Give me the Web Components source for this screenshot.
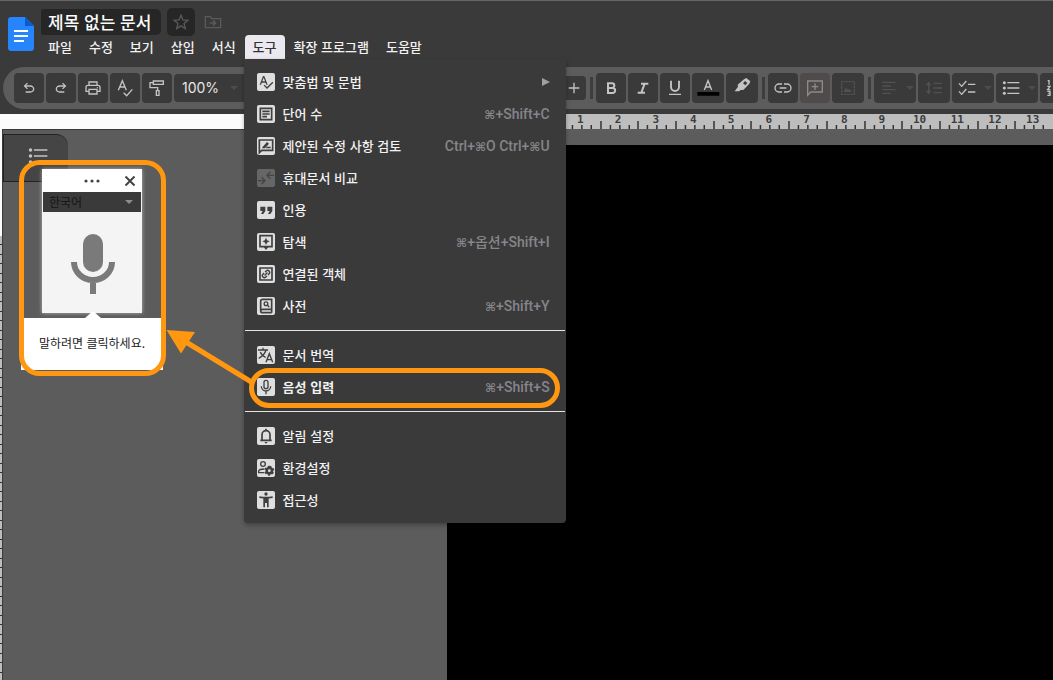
<!DOCTYPE html>
<html lang="ko">
<head>
<meta charset="utf-8">
<title>제목 없는 문서</title>
<style>
  html, body { margin: 0; height: 100%; overflow: hidden; background: #5c5c5c; }
  body { font-family: "Noto Sans CJK KR", sans-serif; font-size: 13px; font-weight: 500; color: #f2f2f2; }
</style>
</head>
<body>
<docs-app></docs-app>
<script>
const S = 'fill="none" stroke="currentColor" stroke-width="2"';
const B = 'fill="none" stroke="currentColor" stroke-width="2.500"';
const ICONS = {
  star: `<path ${S} d="M12 2l2.900 6.900 7.400.6-5.700 4.900 1.800 7.300-6.400-3.900-6.400 3.900 1.800-7.300L1.700 9.500l7.400-.6z"/>`,
  folder: `<path ${S} d="M.500 4h7.500l2 3h13.500v13.500h-23z"/><path ${S} d="M7 13.500h9m-4-4l4 4-4 4"/>`,
  undo: `<path fill="currentColor" d="M7 19v-2h7.1q1.575 0 2.737-1T18 13.5 16.838 11 14.1 10H7.8l2.6 2.6L9 14 4 9l5-5 1.400 1.400L7.800 8h6.300q2.425 0 4.163 1.575T20 13.500t-1.737 3.925T14.100 19z"/>`,
  redo: `<path fill="currentColor" transform="matrix(-1 0 0 1 24 0)" d="M7 19v-2h7.1q1.575 0 2.737-1T18 13.5 16.838 11 14.1 10H7.8l2.6 2.6L9 14 4 9l5-5 1.400 1.400L7.800 8h6.300q2.425 0 4.163 1.575T20 13.500t-1.737 3.925T14.100 19z"/>`,
  print: `<path ${S} d="M6 8V3h12v5M6 17H1.500v-6q0-3 3-3h15q3 0 3 3v6H18M6 14h12v7H6z"/><circle cx="18.500" cy="11.500" r="1" fill="currentColor"/>`,
  spell: `<path fill="currentColor" d="M12.450 16h2.090L9.430 3H7.570L2.460 16h2.090l1.120-3h5.640l1.140 3zm-6.020-5L8.500 5.480 10.570 11H6.430zm15.160.590l-8.090 8.090L9.830 16l-1.410 1.410 5.090 5.090L23 13l-1.410-1.410z"/>`,
  spellbar: `<path ${S} stroke-width="2.300" d="M2 15.500L8 1l6 14.500M4.500 10.500h7M10 19l4.500 4.500L23 14"/>`,
  paint: `<path ${S} d="M6.500 1.500h15v5h-15zM6.500 4H1.500v7.500H13V16"/><path ${S} d="M11 16h4v7h-4z"/>`,
  plus: `<path ${S} d="M12 4v16M4 12h16"/>`,
  bold: `<path fill="none" stroke="currentColor" stroke-width="3" d="M7.500 5h6a3.200 3.200 0 010 7H7.500zM7.500 12h7a3.500 3.500 0 010 7.500H7.500z"/>`,
  italic: `<path fill="none" stroke="currentColor" stroke-width="3" d="M9 5.500h11M4 19h11M14.500 5.500L9.500 19"/>`,
  underline: `<path fill="none" stroke="currentColor" stroke-width="2.800" d="M6 1v9.500a6 6 0 0012 0V1"/><path ${S} d="M3 21.500h18"/>`,
  color: `<path ${S} stroke-width="2.500" d="M6.500 15L12 1l5.500 14M8.500 10.500h7"/><path d="M-4 18h33v5.500H-4z" fill="#000"/>`,
  pen: `<path fill="currentColor" fill-rule="evenodd" d="M15 -1l3.500-2 6 5-1.500 3.500-9 9.500-4 0-2.500 2H1l5-7-.500-3zM13.500 5l3.500 3 3-3.500L16.500 1.500z"/>`,
  link: `<path ${S} stroke-width="2.500" d="M10.500 6H6a6 6 0 000 12h4.500M13.500 6H18a6 6 0 010 12h-4.500M7 12h10"/>`,
  comment: `<path ${S} d="M1 23V1.500h22V18H5.500z"/><path ${S} d="M12 5v10M7 10h10"/>`,
  image: `<path ${S} stroke-dasharray="4 1" d="M2.500 2.500h19v19h-19z"/><path fill="currentColor" d="M5 18l4-7 3 4 2-2 4 5z"/>`,
  align: `<path ${S} stroke-width="2.400" d="M2 3.500h20M2 9h13M2 14.500h20M2 20h13"/>`,
  spacing: `<path ${S} d="M4 4v16M1 8l3-4 3 4M1 16l3 4 3-4M11 5h13M11 12h13M11 19h13"/>`,
  check: `<path ${S} stroke-width="2.600" d="M0 5l4 4.500L11 1.500M0 17l4 4.500L11 13.500M13.500 6.500h11M13.500 18h11"/>`,
  list: `<path ${S} stroke-width="2.500" d="M6.500 4h18M6.500 12h18M6.500 20h18"/><g fill="currentColor"><circle cx="2" cy="4" r="2.300"/><circle cx="2" cy="12" r="2.300"/><circle cx="2" cy="20" r="2.300"/></g>`,
  numbered: `<path ${S} stroke-width="1.700" d="M1 1h2v6M.5 9.500h4L1 14.500h4M.5 17h4v6h-4M2 20h2.500"/><path ${S} stroke-width="2.500" d="M9 4h15M9 12h15M9 20h15"/>`,
  words: `<path ${B} d="M3.500 3.500h17v17h-17zM6.500 8h11M6.500 12h11M6.500 16h7"/>`,
  suggest: `<path ${B} d="M2 22V3h20v15.500H5.500z"/><path fill="currentColor" d="M6.500 14l7-8 3 2.500-6 7h-4zM13 13h6v2.500h-7z"/>`,
  compare: `<path ${S} d="M0 16h10m-4.500-5l5 5-5 5M24 8H14m4.500-5l-5 5 5 5"/>`,
  quote: `<path fill="currentColor" d="M3.500 7H11v6.500L8 18H4.500L7 13.500H3.500zM14 7h7.500v6.500l-3 4.500H15l2.500-4.500H14z"/>`,
  explore: `<path ${B} d="M3 2.500h18v16.500H3z"/><path fill="currentColor" d="M8.500 19.500h7L12 24zM12 5.500l1.700 3.800L17.500 11l-3.800 1.700L12 16.500l-1.700-3.800L6.500 11l3.800-1.700z"/>`,
  linked: `<path ${B} d="M3 3h18v18H3z"/><g transform="rotate(-45 12 12)"><path ${S} d="M11 9H8.500a3 3 0 000 6H11M13 9h2.500a3 3 0 010 6H13M9 12h6"/></g>`,
  dict: `<path ${B} d="M20.500 17V2H7Q4 2 4 4.500V19q0 3 3 3h13.500M4 19.500q0-2.500 3-2.500h13.500v5"/><circle cx="12" cy="8.500" r="2.800" ${S}/><path ${S} d="M14 10.500l3 3.500"/>`,
  translate: `<path ${S} stroke-width="2.300" d="M0 4.500h15M7.500 1v3.500M12 4.500Q10 12 1 17M3.500 7.500q2.500 6 8 8"/><path ${S} stroke-width="2.300" d="M12 23l5-13 5 13M13.500 19h7"/>`,
  mic: `<rect x="9" y="2" width="6" height="12.500" rx="3" ${S}/><path ${S} d="M5 11a7 7 0 0014 0M12 18v5"/>`,
  bell: `<path ${B} d="M3.500 18.500h17M6 18v-8a6 6 0 0112 0v8M12 1v3"/><path fill="currentColor" d="M9.500 21h5L12 23.500z"/>`,
  prefs: `<circle cx="7.500" cy="6" r="3.500" ${S}/><path ${S} d="M9.500 19H1v-2.500q1-3 8.500-3"/><circle cx="17" cy="16" r="4" fill="none" stroke="currentColor" stroke-width="3.800"/><path fill="none" stroke="currentColor" stroke-width="3" stroke-dasharray="2.880 2.880" d="M17 10a6 6 0 010 12 6 6 0 010-12"/>`,
  access: `<circle cx="12" cy="3" r="2.500" fill="currentColor"/><path fill="currentColor" d="M2 6.500q10 1.500 20 0V9q-3 .600-6 .800V23h-2.500v-6.500h-3V23H8V9.800Q5 9.600 2 9z"/>`
};

function define(name, html) {
  const tpl = document.createElement('template');
  customElements.define(name, class extends HTMLElement {
    connectedCallback() {
      if (this.shadowRoot) return;
      tpl.innerHTML = typeof html === 'function' ? html(this) : html;
      this.attachShadow({ mode: 'open' }).append(tpl.content.cloneNode(true));
    }
  });
}

define('ui-icon', el => `
<style>:host{display:block;width:16px;height:16px;flex:none} svg{display:block;width:100%;height:100%;overflow:visible}</style>
<svg viewBox="0 0 24 24" aria-hidden="true">${ICONS[el.getAttribute('name')]}</svg>`);

define('tool-button', el => `
<style>
  :host{display:block;flex:none;height:30px;width:30px;color:#c4c4c4}
  :host([wide]){width:32px}
  :host([drop]){width:42px}
  :host([off]){color:#515151}
  button{all:unset;box-sizing:border-box;width:100%;height:100%;display:flex;align-items:center;justify-content:center;gap:9px;background:#3a3a3a;border-radius:4px}
  :host([pale]) button{background:#4f4b4b;color:#8c8c8c}
  :host([small]){width:24px;height:24px}
  :host([drop]) button{justify-content:flex-start;padding-left:7px}
  i{border:4px solid transparent;border-top-color:#4c4c4c;border-bottom:0}
</style>
<button type="button" aria-label="${el.getAttribute('label')}"><ui-icon name="${el.getAttribute('icon')}"></ui-icon>${el.hasAttribute('drop') ? '<i></i>' : ''}</button>`);

define('tool-divider', `<style>:host{display:block;flex:none;width:3px;height:22px;margin:0 1px 0 2px;background:#3e3e3e}</style>`);

define('docs-toolbar', `
<style>
  :host{display:flex;align-items:center;gap:2px;height:42px;margin-left:3px;padding-left:11px;box-sizing:border-box;background:#5c5c5c;border-radius:21px 0 0 21px;overflow:hidden}
  .zoom{display:flex;align-items:center;flex:none;width:80px;height:28px;background:#3a3a3a;border-radius:4px}
  input{all:unset;box-sizing:border-box;width:56px;padding-left:8px;font:400 14px/28px "Inter",sans-serif;color:#e6e6e6}
  i{border:4px solid transparent;border-top-color:#4c4c4c;border-bottom:0}
  .fonts{flex:none;width:304px}
</style>
<tool-button icon="undo" label="실행취소"></tool-button>
<tool-button icon="redo" label="재실행"></tool-button>
<tool-button icon="print" label="인쇄"></tool-button>
<tool-button icon="spellbar" label="맞춤법 및 문법 검사"></tool-button>
<tool-button icon="paint" label="서식 복사"></tool-button>
<div class="zoom"><input aria-label="확대/축소" value="100%"><i></i></div>
<div class="fonts"></div>
<tool-button small icon="plus" label="글꼴 크기 늘리기"></tool-button>
<tool-divider></tool-divider>
<tool-button icon="bold" label="굵게"></tool-button>
<tool-button icon="italic" label="기울임꼴"></tool-button>
<tool-button icon="underline" label="밑줄"></tool-button>
<tool-button wide icon="color" label="텍스트 색상"></tool-button>
<tool-button wide icon="pen" label="강조 색상"></tool-button>
<tool-divider></tool-divider>
<tool-button icon="link" label="링크 삽입"></tool-button>
<tool-button pale icon="comment" label="댓글 추가"></tool-button>
<tool-button wide off icon="image" label="이미지 삽입"></tool-button>
<tool-divider></tool-divider>
<tool-button drop off icon="align" label="정렬"></tool-button>
<tool-button wide off icon="spacing" label="줄 간격"></tool-button>
<tool-button drop icon="check" label="체크리스트"></tool-button>
<tool-button drop icon="list" label="글머리기호 목록"></tool-button>
<tool-button drop icon="numbered" label="번호 매기기 목록"></tool-button>`);

define('menu-entry', el => `
<style>
  :host{display:block}
  button{all:unset;box-sizing:border-box;display:flex;align-items:center;width:100%;height:32px;padding:0 16px 0 13px;gap:8px;white-space:nowrap}
  ui-icon{width:16px;height:16px;padding:1px;background:#dedede;color:#3f3f3f;border-radius:2px}
  :host([dim]) ui-icon{background:#666;color:#444}
  .label{flex:1;line-height:20px;padding-bottom:1px}
  :host([strong]) .label{font-weight:700}
  kbd{font:500 14px/20px Roboto,"Noto Sans CJK KR",sans-serif;color:#85858a}
  kbd span{font:700 12px/20px "DejaVu Sans",sans-serif}
  .arrow{border:4px solid transparent;border-left:8px solid #a0a0a0;border-right:0}
</style>
<button type="button" role="menuitem"><ui-icon name="${el.getAttribute('icon')}"></ui-icon><span class="label"><slot></slot></span>
${el.hasAttribute('keys') ? `<kbd>${el.getAttribute('keys').replaceAll('⌘', '<span>⌘</span>')}</kbd>` : ''}${el.hasAttribute('sub') ? '<span class="arrow"></span>' : ''}</button>`);

define('tools-menu', `
<style>
  :host{display:block;box-sizing:border-box;width:322px;padding:7px 0;background:#3a3a3a;color:#f2f2f2;border-radius:0 0 4px 4px;box-shadow:0 2px 4px rgba(0,0,0,.3)}
  hr{border:0;height:1px;margin:8px 1px;background:#e4e4e4}
</style>
<div role="menu" aria-label="도구">
<menu-entry icon="spell" sub>맞춤법 및 문법</menu-entry>
<menu-entry icon="words" keys="⌘+Shift+C">단어 수</menu-entry>
<menu-entry icon="suggest" keys="Ctrl+⌘O Ctrl+⌘U">제안된 수정 사항 검토</menu-entry>
<menu-entry icon="compare" dim>휴대문서 비교</menu-entry>
<menu-entry icon="quote">인용</menu-entry>
<menu-entry icon="explore" keys="⌘+옵션+Shift+I">탐색</menu-entry>
<menu-entry icon="linked">연결된 객체</menu-entry>
<menu-entry icon="dict" keys="⌘+Shift+Y">사전</menu-entry>
<hr>
<menu-entry icon="translate">문서 번역</menu-entry>
<menu-entry icon="mic" strong keys="⌘+Shift+S">음성 입력</menu-entry>
<hr>
<menu-entry icon="bell">알림 설정</menu-entry>
<menu-entry icon="prefs">환경설정</menu-entry>
<menu-entry icon="access">접근성</menu-entry>
</div>`);

define('menu-tab', `
<style>
  :host{display:block;position:relative;flex:none}
  button{all:unset;display:block;padding:0 8px;line-height:24px;white-space:nowrap}
  :host([open]) button{background:#ebe9ef;color:#333;border-radius:4px 4px 0 0}
  ::slotted(tools-menu){position:absolute;top:100%;left:-1px}
</style>
<button type="button"><slot></slot></button><slot name="menu"></slot>`);

define('docs-header', `
<style>
  :host{display:grid;grid-template-columns:26px 1fr;column-gap:6px;box-sizing:border-box;height:67px;padding:8px 0 0 8px;border-top:1px solid #666;position:relative;z-index:2}
  .logo{width:26px;height:34px;margin-top:8px}
  .title{display:flex;align-items:center;height:26px;gap:6px;padding-left:1px;color:#5a5a5a}
  input{all:unset;box-sizing:border-box;width:120px;height:26px;padding-left:7px;font-size:17px;line-height:26px;background:#262626;color:#fafafa;border-radius:2px 5px 5px 2px}
  .title button{all:unset;display:flex;align-items:center;justify-content:center;width:28px;height:28px;border-radius:5px}
  .title .fav{background:#262626}
  .title .move{width:24px}
  nav{display:flex;gap:1px}
</style>
<svg class="logo" viewBox="0 0 26 34" aria-label="Docs"><path fill="#2684fc" d="M3 0h14l9 9v22q0 3-3 3H3q-3 0-3-3V3q0-3 3-3z"/><path fill="#0b5bd3" d="M17 0l9 9h-9z"/><path stroke="#fff" stroke-width="2" d="M6 14h14M6 19h14M6 24h10"/></svg>
<div>
  <div class="title"><input aria-label="문서 제목" value="제목 없는 문서"><button class="fav" type="button" aria-label="별표"><ui-icon name="star"></ui-icon></button><button class="move" type="button" aria-label="이동"><ui-icon name="folder"></ui-icon></button></div>
  <nav>
    <menu-tab>파일</menu-tab><menu-tab>수정</menu-tab><menu-tab>보기</menu-tab><menu-tab>삽입</menu-tab><menu-tab>서식</menu-tab>
    <menu-tab open>도구<tools-menu slot="menu"></tools-menu></menu-tab>
    <menu-tab>확장 프로그램</menu-tab><menu-tab>도움말</menu-tab>
  </nav>
</div>`);

define('docs-ruler', () => `
<style>
  :host{display:grid;grid-template-columns:447px 1fr;height:15px;margin-top:5px}
  .margin{background:#fcfcfd}
  .scale{display:grid;grid-template-columns:repeat(13,1fr);padding-left:116px;background:#bdbdbd;color:#3c3c3c}
  .cell{display:grid;font:700 11px/12px "DejaVu Sans Mono",monospace;text-align:center}
  .cell > *{grid-area:1/1}
  span{padding-right:3px}
  svg{display:block;width:100%;height:15px;overflow:visible}
  line{stroke:#333;stroke-width:1.500}
</style>
<div class="margin"></div>
<div class="scale">${Array.from({ length: 13 }, (_, i) => `<div class="cell"><span>${i + 1}</span><svg><line x1="0%" x2="0%" y1="7" y2="15"/><line x1="25%" x2="25%" y1="11" y2="15"/><line x1="50%" x2="50%" y1="11" y2="15"/><line x1="75%" x2="75%" y1="11" y2="15"/></svg></div>`).join('')}</div>`);

define('voice-panel', `
<style>
  :host{display:flex;flex-direction:column;align-items:center;width:142px}
  .card{box-sizing:border-box;width:100px;background:#f4f4f4;box-shadow:0 0 4px rgba(255,255,255,.55)}
  header{display:flex;justify-content:flex-end;align-items:center;height:23px;padding-right:6px;gap:24px;background:#fff}
  button{all:unset;display:block}
  svg{display:block}
  .lang{display:grid;align-items:center;height:20px;margin:0 1px;background:#3a3a3a}
  .lang > *{grid-area:1/1}
  select{all:unset;padding-left:6px;font-size:12px;font-weight:400;line-height:20px;color:#151515}
  i{justify-self:end;margin-right:8px;border:4px solid transparent;border-top-color:#8c8c8c;border-bottom:0}
  .mic{display:flex;box-sizing:border-box;width:100%;justify-content:center;padding:22px 0 19px 2px}
  .tip{position:relative;box-sizing:border-box;width:100%;height:52px;margin-top:5px;background:#fff;color:#222;font-size:12px;font-weight:400;line-height:50px;text-align:center}
  .tip::before{content:"";position:absolute;left:64px;bottom:100%;border:8px solid transparent;border-top:0;border-bottom:7px solid #fff}
</style>
<div class="card">
  <header>
    <button type="button" aria-label="옵션"><svg width="16" height="4"><g fill="#444"><circle cx="2" cy="2" r="1.600"/><circle cx="8" cy="2" r="1.600"/><circle cx="14" cy="2" r="1.600"/></g></svg></button>
    <button type="button" aria-label="닫기"><svg width="12" height="12"><path stroke="#444" stroke-width="2" d="M1.500 1.500l9 9M10.500 1.500l-9 9"/></svg></button>
  </header>
  <div class="lang"><select aria-label="언어"><option>한국어</option></select><i></i></div>
  <button class="mic" type="button" aria-label="음성 입력 시작"><svg width="44" height="60"><rect x="12" width="20" height="38" rx="10" fill="#7a7a7a"/><path fill="none" stroke="#7a7a7a" stroke-width="6" d="M3 28a19 18 0 0038 0M22 46v14"/></svg></button>
</div>
<div class="tip">말하려면 클릭하세요.</div>`);

define('docs-workspace', `
<style>
  :host{display:grid;grid-template-columns:3px 444px 1fr;flex:1;position:relative;background:#5c5c5c}
  .vruler{box-sizing:border-box;border-right:1px solid #3a3a3a;background:#fcfcfd;padding-top:107px;display:flex}
  .ticks{flex:1;background:repeating-linear-gradient(#bdbdbd 0 8px,#333 8px 9px,#bdbdbd 9px 18px,#333 18px 19px)}
  .side{border-top:1px solid #3a3a3a}
  .tab{all:unset;box-sizing:border-box;display:flex;width:65px;height:48px;margin-top:4px;padding:12px 0 0 25px;background:#454545;color:#c4c4c4;border:1px solid #222;border-right:0;border-radius:0 12px 0 0}
  .tab ui-icon{width:18px;height:18px}
  .page{margin-top:16px;background:#000}
  voice-panel{position:absolute;left:21px;top:40px}
</style>
<div class="vruler"><div class="ticks"></div></div>
<div class="side"><button class="tab" type="button" aria-label="문서 개요"><ui-icon name="list"></ui-icon></button></div>
<div class="page"></div>
<voice-panel></voice-panel>`);

define('callout-layer', `
<style>:host{position:absolute;left:0;top:0;z-index:3;pointer-events:none} svg{display:block}</style>
<svg width="570" height="420" fill="none" stroke="#ff9710" stroke-width="5">
  <rect x="21.500" y="162.500" width="142" height="211" rx="18"/>
  <rect x="251.500" y="370.500" width="306" height="35" rx="17.500"/>
  <path d="M186 342l67 41"/>
  <path fill="#ff9710" stroke="none" d="M166.500 330l28.500 2-14 21.500z"/>
</svg>`);

define('docs-app', `
<style>
  :host{display:flex;flex-direction:column;position:relative;min-height:100vh;background:#3a3a3a;overflow:hidden}
</style>
<docs-header></docs-header>
<docs-toolbar></docs-toolbar>
<docs-ruler></docs-ruler>
<docs-workspace></docs-workspace>
<callout-layer></callout-layer>`);
</script>
</body>
</html>
